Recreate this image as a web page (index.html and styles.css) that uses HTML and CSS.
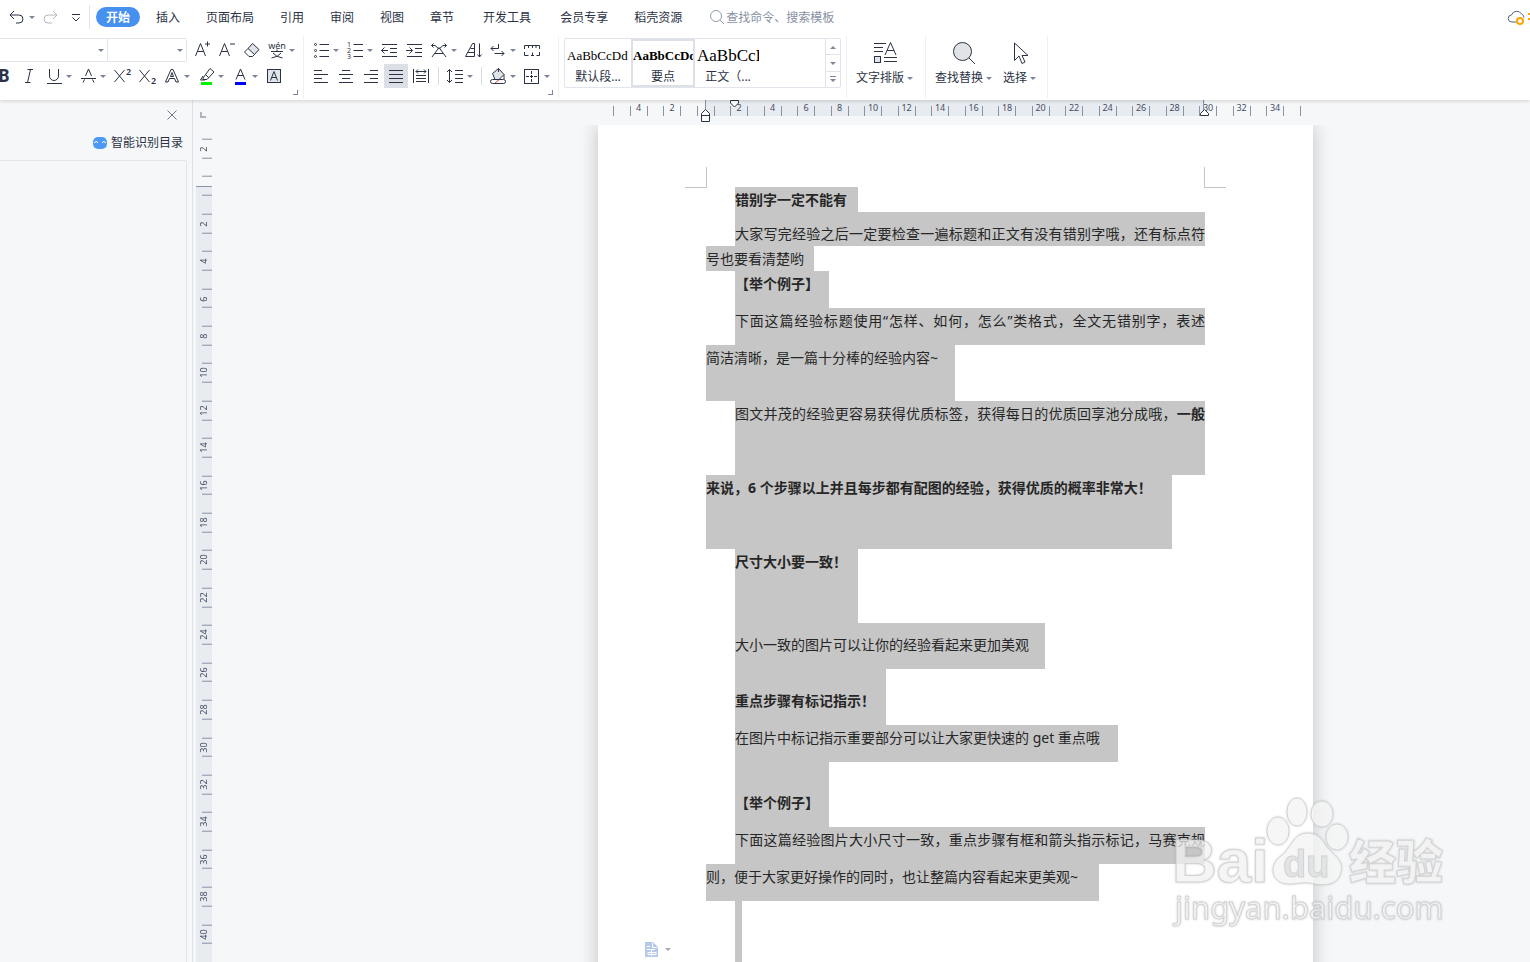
FILE: index.html
```html
<!DOCTYPE html>
<html lang="zh-CN">
  <head>
    <meta charset="UTF-8" />
    <meta name="viewport" content="width=device-width, initial-scale=1.0" />
    <title>文档</title>
    <link rel="stylesheet" href="styles.css">
  </head>
  <body>
    <header class="ribbon">
      <div class="menu">
        <div class="quick">
          <button class="tool drop" aria-label="撤销"><svg viewBox="0 0 24 24"><path d="M10 7L6 11L10 15M6 11H15a3.500 3.500 0 0 1 0 8H12" transform="translate(-1 -1)" /></svg></button>
          <button class="tool faded" aria-label="恢复"><svg viewBox="0 0 24 24"><path d="M14 6L18 10L14 14M18 10H9a3.500 3.500 0 0 0 0 8H13" /></svg></button>
          <button class="tool" aria-label="自定义"><svg viewBox="0 0 24 24"><path d="M8 9.500H16M8.500 12.500L12 16L15.500 12.500" /></svg></button>
        </div>
        <nav class="tabs">
          <button class="tab active">开始</button>
          <button class="tab">插入</button>
          <button class="tab">页面布局</button>
          <button class="tab">引用</button>
          <button class="tab">审阅</button>
          <button class="tab">视图</button>
          <button class="tab">章节</button>
          <button class="tab wide">开发工具</button>
          <button class="tab wide">会员专享</button>
          <button class="tab">稻壳资源</button>
        </nav>
        <label class="search">
          <svg viewBox="0 0 16 16"><circle cx="7" cy="7" r="5.500" /><path d="M11 11L15 15" /></svg>
          <input type="text" placeholder="查找命令、搜索模板" aria-label="查找命令、搜索模板" />
        </label>
        <button class="cloud" aria-label="云同步">
          <svg viewBox="0 0 24 20"><path d="M10 15H6a3.500 3.500 0 0 1-.5-7A5.500 5.500 0 0 1 15.500 7A4 4 0 0 1 18 10.500" /><circle class="orange" cx="14" cy="14" r="3" /><path class="orange thin" d="M23 6V8M23 11V13" /></svg>
        </button>
      </div>

      <div class="tools">
        <section class="group font-group">
          <div class="row">
            <label class="combo combo-font"><select aria-label="字体"><option></option></select></label>
            <label class="combo combo-size"><select aria-label="字号"><option></option></select></label>
            <button class="tool" aria-label="增大字号"><svg viewBox="0 0 24 24"><path d="M5.500 18L10.500 5.500L15.500 18M7.500 13.500H13.500M17.500 3.500V8.500M15 6H20" /></svg></button>
            <button class="tool" aria-label="减小字号"><svg viewBox="0 0 24 24"><path d="M4.500 18L9.500 5.500L14.500 18M6.500 13.500H12.500M15 6H20" /></svg></button>
            <button class="tool" aria-label="清除格式"><svg viewBox="0 0 24 24"><path class="tint" d="M12.500 5.500L19 11.500L14.500 16.500L8 10.500Z" /><path d="M8 10.500L4.500 14L9 18.500H12.500L14.500 16.500" /></svg></button>
            <button class="tool drop" aria-label="拼音指南"><svg viewBox="0 0 24 24"><text x="12" y="11" font-size="9" text-anchor="middle">wén</text><path d="M6 13.500H18M12 11.500V13.500M8 15Q11 19 17.500 20M16 15Q13 19 6.500 20" /></svg></button>
          </div>
          <div class="row row-text">
            <button class="tool" aria-label="加粗"><svg viewBox="0 0 24 24"><text x="12" y="18" font-size="17" font-weight="700" text-anchor="middle">B</text></svg></button>
            <button class="tool" aria-label="倾斜"><svg viewBox="0 0 24 24"><path d="M10.500 5.500H16M8 18.500H13.500M13.500 5.500L10.500 18.500" /></svg></button>
            <button class="tool drop" aria-label="下划线"><svg viewBox="0 0 24 24"><path d="M7.500 5V12a4.500 4.500 0 0 0 9 0V5M5 19.500H20" /></svg></button>
            <button class="tool drop" aria-label="删除线"><svg viewBox="0 0 24 24"><path d="M9.500 12L12.500 5L15.500 12M8.500 15.500L7 18.500M16.500 15.500L18 18.500M5 14.500H20" /></svg></button>
            <button class="tool" aria-label="上标"><svg viewBox="0 0 24 24"><path d="M4.500 6L14.500 18M14.500 6L4.500 18" /><text x="16" y="11" font-size="9" font-weight="600">2</text></svg></button>
            <button class="tool" aria-label="下标"><svg viewBox="0 0 24 24"><path d="M4.500 6L14.500 18M14.500 6L4.500 18" /><text x="16" y="20" font-size="9" font-weight="600">2</text></svg></button>
            <button class="tool drop" aria-label="文字效果"><svg viewBox="0 0 24 24"><path d="M5.500 18L11 5.500H13L18.500 18H16L14.500 14.500H9.500L8 18ZM10.500 12.500L12 8.500L13.500 12.500Z" /></svg></button>
            <button class="tool drop" aria-label="突出显示"><svg viewBox="0 0 24 24"><path d="M9 14L16 4.500L20 8L13 15.500H9ZM9 12L6.500 16H11M11.500 10.500L15 14" /><path class="green" d="M7 19.500H18" /></svg></button>
            <button class="tool drop" aria-label="字体颜色"><svg viewBox="0 0 24 24"><path d="M8 15.500L12.500 5L17 15.500M9.500 11.500H15.500" /><path class="blue" d="M7 19.500H18" /></svg></button>
            <button class="tool" aria-label="字符底纹"><svg viewBox="0 0 24 24"><rect class="tint" x="5.500" y="5.500" width="13" height="13" /><path d="M8.500 16.500L12 7.500L15.500 16.500M9.500 13.500H14.500" /></svg></button>
          </div>
          <i class="launcher"></i>
        </section>

        <section class="group para-group">
          <div class="row">
            <button class="tool drop" aria-label="项目符号"><svg viewBox="0 0 24 24"><path d="M10.500 6.500H20M10.500 12.500H20M10.500 18.500H20" /><circle cx="6.500" cy="6.500" r="1" /><circle cx="6.500" cy="12.500" r="1" /><circle cx="6.500" cy="18.500" r="1" /></svg></button>
            <button class="tool drop" aria-label="编号"><svg viewBox="0 0 24 24"><path d="M10.500 6.500H20M10.500 12.500H20M10.500 18.500H20" /><text x="4" y="9" font-size="7">1</text><text x="4" y="15" font-size="7">2</text><text x="4" y="21" font-size="7">3</text></svg></button>
            <button class="tool" aria-label="减少缩进"><svg viewBox="0 0 24 24"><path d="M5 6.500H20M13 10.500H20M13 14.500H20M5 18.500H20M4.500 12.500H11M7.500 9.500L4.500 12.500L7.500 15.500" /></svg></button>
            <button class="tool" aria-label="增加缩进"><svg viewBox="0 0 24 24"><path d="M5 6.500H20M13 10.500H20M13 14.500H20M5 18.500H20M4 12.500H10.500M7.500 9.500L10.500 12.500L7.500 15.500" /></svg></button>
            <button class="tool drop" aria-label="中文版式"><svg viewBox="0 0 24 24"><path d="M5 19L12 9.500L19 19M8 15.500H16M4.500 7.500H8L12 11M19.500 7.500H16L12 11M6.500 5.500L4.500 7.500L6.500 9.500M17.500 5.500L19.500 7.500L17.500 9.500" /></svg></button>
            <button class="tool" aria-label="排序"><svg viewBox="0 0 24 24"><path d="M4.500 18.500L11.500 5.500H13.500V18.500ZM7 14.500H13.500M9.500 10.500H13.500M18.500 5.500V19M16.500 16.500L18.500 19L20.500 16.500" /></svg></button>
            <button class="tool drop" aria-label="换行"><svg viewBox="0 0 24 24"><path d="M12.500 6V10.500H5M7.500 8L5 10.500L7.500 13M8.500 15.500H18M15.500 13L18 15.500L15.500 18" /></svg></button>
            <button class="tool" aria-label="制表位"><svg viewBox="0 0 24 24"><path d="M4.500 11V7.500H19.500V11M8.500 7.500V10M12.500 7.500V10M16 7.500V10M4.500 14V17.500H8.500M11 17.500H14M16.500 17.500H19.500V14M12.500 14.500V17" /></svg></button>
          </div>
          <div class="row">
            <button class="tool" aria-label="左对齐"><svg viewBox="0 0 24 24"><path d="M5 6.500H13M5 10.500H19M5 14.500H13M5 18.500H19" /></svg></button>
            <button class="tool" aria-label="居中"><svg viewBox="0 0 24 24"><path d="M8 6.500H16M5 10.500H19M8 14.500H16M5 18.500H19" /></svg></button>
            <button class="tool" aria-label="右对齐"><svg viewBox="0 0 24 24"><path d="M11 6.500H19M5 10.500H19M11 14.500H19M5 18.500H19" /></svg></button>
            <button class="tool pressed" aria-label="两端对齐"><svg viewBox="0 0 24 24"><path d="M5 6.500H19M5 10.500H19M5 14.500H19M5 18.500H19" /></svg></button>
            <button class="tool" aria-label="分散对齐"><svg viewBox="0 0 24 24"><path d="M4.500 5V19M19.500 5V19M7 7.500H17M9 5.500L7 7.500L9 9.500M15 5.500L17 7.500L15 9.500M7 11.500H17M7 14.500H17M7 17.500H17" /></svg></button>
            <i class="bar"></i>
            <button class="tool drop" aria-label="行距"><svg viewBox="0 0 24 24"><path d="M6.500 5.500V18.500M4 8L6.500 5.500L9 8M4 16L6.500 18.500L9 16M12 6.500H20M12 10.500H20M12 14.500H20M12 18.500H20" /></svg></button>
            <i class="bar"></i>
            <button class="tool drop" aria-label="底纹颜色"><svg viewBox="0 0 24 24"><path class="tint" d="M6.500 9.500L12.500 4.500L18 10.500L13 15.500H9Z" /><path d="M12.500 4.500V8M18 10.500V15" /><rect class="plain" x="4.500" y="15.500" width="15" height="4" rx="2" /><path class="red" d="M9 19L13 16" /></svg></button>
            <button class="tool drop" aria-label="边框"><svg viewBox="0 0 24 24"><rect x="4.500" y="5.500" width="14" height="14" /><path stroke-dasharray="3 1" d="M11.500 7V18M6 12.500H17" /></svg></button>
          </div>
          <i class="launcher"></i>
        </section>

        <section class="group style-group">
          <div class="gallery">
            <button class="style"><span class="sample">AaBbCcDd</span><span class="name">默认段...</span></button>
            <button class="style chosen"><span class="sample strong">AaBbCcDd</span><span class="name">要点</span></button>
            <button class="style"><span class="sample large">AaBbCcI</span><span class="name">正文（...</span></button>
            <div class="scroller">
              <button aria-label="上一行"><svg viewBox="0 0 14 14"><path d="M4 9L7 6L10 9Z" /></svg></button>
              <button aria-label="下一行"><svg viewBox="0 0 14 14"><path d="M4 6L7 9L10 6Z" /></svg></button>
              <button aria-label="更多样式"><svg viewBox="0 0 14 14"><path d="M4 7L7 10L10 7ZM4 4H10V5H4Z" /></svg></button>
            </div>
          </div>
        </section>

        <section class="group layout-group">
          <button class="big"><svg viewBox="0 0 28 28"><path d="M3 4.500H15M3 8.500H12M3 12.500H12M13 22.500H26M13 18.500H26M14 16L19.500 3.500L25 16M16 11.500H23" /><rect class="tint" x="3.500" y="17.500" width="6" height="6" /></svg><span class="caption">文字排版</span></button>
        </section>

        <section class="group edit-group">
          <button class="big"><svg viewBox="0 0 28 28"><circle class="tint" cx="12.500" cy="12.500" r="9" /><path d="M19 19L25 25" /></svg><span class="caption">查找替换</span></button>
          <button class="big"><svg viewBox="0 0 28 28"><path d="M8.500 4V21.500L13 17L16 24.500L19 23L16 16.500H22Z" /></svg><span class="caption">选择</span></button>
        </section>
      </div>
    </header>

    <main class="workspace">
      <aside class="outline">
        <button class="close" aria-label="关闭"><svg viewBox="0 0 10 10"><path d="M.5 .5L9.500 9.500M9.500 .5L.5 9.500" /></svg></button>
        <button class="detect"><svg viewBox="0 0 14 12"><rect width="14" height="12" rx="5" /><path d="M1 6L3 4.500L5 5.500M9 5.500L11 4.500L13 6" /></svg>智能识别目录</button>
        <div class="tree"></div>
      </aside>

      <div class="v-ruler">
        <i class="tab-stop"></i>
        <div class="v-scale">
          <b>2</b><b></b><b></b><b></b><b>2</b><b></b><b>4</b><b></b><b>6</b><b></b><b>8</b><b></b>
          <b>10</b><b></b><b>12</b><b></b><b>14</b><b></b><b>16</b><b></b><b>18</b><b></b>
          <b>20</b><b></b><b>22</b><b></b><b>24</b><b></b><b>26</b><b></b><b>28</b><b></b>
          <b>30</b><b></b><b>32</b><b></b><b>34</b><b></b><b>36</b><b></b><b>38</b><b></b>
          <b>40</b><b></b>
        </div>
      </div>

      <div class="canvas">
        <div class="h-ruler">
          <div class="h-scale">
            <b></b><b>4</b><b></b><b>2</b><b></b><b></b><b></b><b>2</b><b></b><b>4</b><b></b><b>6</b><b></b><b>8</b>
            <b></b><b>10</b><b></b><b>12</b><b></b><b>14</b><b></b><b>16</b><b></b><b>18</b>
            <b></b><b>20</b><b></b><b>22</b><b></b><b>24</b><b></b><b>26</b><b></b><b>28</b>
            <b></b><b>30</b><b></b><b>32</b><b></b><b>34</b><b></b>
          </div>
          <svg class="marker marker-left" viewBox="0 0 11 23"><path class="stem" d="M5.500 0V10" /><path class="fill" d="M1.500 21.500V13.500L5.500 9.500L9.500 13.500V21.500ZM1.500 15.500H9.500" /></svg>
          <svg class="marker marker-first" viewBox="0 0 11 23"><path class="fill" d="M1.500 .5H9.500V3L5.500 7L1.500 3Z" /></svg>
          <svg class="marker marker-right" viewBox="0 0 11 23"><path class="stem" d="M4.500 0V10" /><path class="fill" d="M1.500 15.500V13.500L5.500 9.500L9.500 13.500V15.500Z" /></svg>
        </div>

        <article class="page">
          <i class="corner corner-left"></i>
          <i class="corner corner-right"></i>

          <p class="strong"><span class="line indent cells-8">错别字一定不能有</span></p>
          <p>
            <span class="line indent full before-9">大家写完经验之后一定要检查一遍标题和正文有没有错别字哦，还有标点符</span>
            <span class="line cells-7">号也要看清楚哟</span>
          </p>
          <p class="strong"><span class="line indent cells-6 after-12">【举个例子】</span></p>
          <p>
            <span class="line indent full after-12">下面这篇经验标题使用“怎样、如何，怎么”类格式，全文无错别字，表述</span>
            <span class="line cells-17 after-31">简洁清晰，是一篇十分棒的经验内容~</span>
          </p>
          <p>
            <span class="line indent full after-49">图文并茂的经验更容易获得优质标签，获得每日的优质回享池分成哦，<strong>一般</strong></span>
            <span class="line cells-32 after-49"><strong>来说，6 个步骤以上并且每步都有配图的经验，获得优质的概率非常大！</strong></span>
          </p>
          <p class="strong"><span class="line indent cells-8 after-49">尺寸大小要一致！</span></p>
          <p><span class="line indent cells-21 before-9 after-12">大小一致的图片可以让你的经验看起来更加美观</span></p>
          <p class="strong"><span class="line indent cells-10 before-19 after-12">重点步骤有标记指示！</span></p>
          <p><span class="line indent cells-26 after-12">在图片中标记指示重要部分可以让大家更快速的 get 重点哦</span></p>
          <p class="strong"><span class="line indent cells-6 before-28 after-12">【举个例子】</span></p>
          <p>
            <span class="line indent full after-12">下面这篇经验图片大小尺寸一致，重点步骤有框和箭头指示标记，马赛克规</span>
            <span class="line cells-27 after-12">则，便于大家更好操作的同时，也让整篇内容看起来更美观~</span>
          </p>
          <p><span class="line indent blank after-49"></span></p>

          <button class="paste" aria-label="段落选项"><svg viewBox="0 0 13 15"><path class="sheet" d="M0 0H8L13 5V15H0Z" /><path class="rule" d="M7.500 1V5.500H12M2 4.500H5M2 7.500H10M3 10.500H11V12.500H3ZM6.500 8V14" /></svg></button>
        </article>
      </div>
    </main>

    <svg class="watermark" viewBox="0 0 290 150" aria-hidden="true">
      <ellipse cx="108" cy="61" rx="11" ry="14" />
      <ellipse cx="127" cy="42" rx="10" ry="14" />
      <ellipse cx="152" cy="44" rx="11" ry="13" />
      <ellipse cx="167" cy="67" rx="11" ry="13" />
      <path d="M137 63C123 63 121 79 111 86C98 95 101 114 119 114C128 114 131 112 140 113C153 116 168 116 171 102C174 90 162 84 156 76C151 68 147 63 137 63Z" />
      <text class="word" x="2" y="112">Bai</text>
      <text class="du" x="113" y="107">du</text>
      <text class="cjk" x="179" y="109">经验</text>
      <text class="site" x="5" y="149">jingyan.baidu.com</text>
    </svg>
  </body>
</html>
```

FILE: styles.css
```css
* {
  margin: 0;
  padding: 0;
  box-sizing: border-box;
}

:root {
  --ink: #2b3245;
  --muted: #7c879e;
  --line: #e1e4ea;
  --back: #f5f7f9;
  --band: #e8ebf0;
  --select: #c6c6c6;
  font-family: "Noto Sans", "Noto Sans CJK SC", sans-serif;
}

body {
  display: flex;
  flex-direction: column;
  height: 100vh;
  overflow: hidden;
  position: relative;
  background: var(--back);
  color: var(--ink);
  font-size: 12px;
}

button,
input,
select {
  border: none;
  background: none;
  color: inherit;
  font: inherit;
}

svg {
  fill: none;
  stroke: var(--ink);
  stroke-width: 1;
}

svg text {
  fill: var(--ink);
  stroke: none;
}

.tint {
  fill: #e1e4e7;
}

/* ribbon */

.ribbon {
  height: 100px;
  flex: none;
  background: #fff;
  box-shadow: 0 1px 4px rgba(0, 0, 0, 0.16);
  position: relative;
  z-index: 2;
}

.menu {
  display: flex;
  align-items: center;
  height: 34px;
}

.quick {
  display: flex;
  align-items: center;
  height: 24px;
  width: 90px;
  padding-left: 5px;
  border-right: 1px solid var(--line);
}

.faded svg {
  stroke: #b4b8c0;
}

.tabs {
  display: flex;
  padding-left: 6px;
}

.tab {
  height: 20px;
  padding: 1px 13px 0;
  line-height: 20px;
  white-space: nowrap;
}

.tab.active {
  padding: 1px 10px 0;
  margin-right: 3px;
  border-radius: 10px;
  background: #4690f0;
  color: #fff;
  font-weight: 700;
}

.tab.wide {
  padding-left: 16px;
}

.search {
  display: flex;
  align-items: center;
  gap: 1px;
  margin-left: 14px;
  color: #8790a5;
}

.search svg {
  width: 16px;
  height: 16px;
  stroke: #929bb0;
}

.search input {
  width: 150px;
  outline: none;
}

.search input::placeholder {
  color: #8790a5;
}

.cloud {
  margin-left: auto;
  width: 24px;
  height: 20px;
}

.cloud svg {
  width: 24px;
  height: 20px;
  stroke: #56617b;
}

.cloud .orange {
  stroke: #ffa400;
  stroke-width: 2;
}

.tools {
  display: flex;
  height: 64px;
  padding-top: 2px;
}

.group {
  position: relative;
  height: 62px;
  border-right: 1px solid #eff0f3;
}

.row {
  display: flex;
  align-items: center;
  height: 26px;
  padding-top: 2px;
}

.row-text {
  margin-left: -8px;
}

.font-group {
  width: 304px;
}

.para-group {
  width: 255px;
  padding-left: 5px;
}

.combo {
  position: relative;
  height: 24px;
  border: 1px solid var(--line);
  border-left: none;
}

.combo-font {
  width: 108px;
}

.combo-size {
  width: 79px;
  margin-right: 3px;
  border-radius: 0 2px 2px 0;
}

.combo select {
  width: 100%;
  height: 100%;
  appearance: none;
}

.combo::after,
.drop::after,
.caption::after,
.paste::after {
  content: "";
  border: 3px solid transparent;
  border-top-color: var(--muted);
  border-bottom: none;
}

.combo::after {
  position: absolute;
  right: 3px;
  top: 10px;
}

.tool {
  display: flex;
  align-items: center;
  flex: none;
  width: 25px;
  height: 24px;
}

.tool svg {
  flex: none;
  width: 24px;
  height: 24px;
}

.tool.drop {
  width: 34px;
}

.tool.pressed {
  background: linear-gradient(#dce0e6, #dce0e6) 0 0 / 24px 24px no-repeat;
}

.green {
  stroke: #00f500;
  stroke-width: 3;
}

.blue {
  stroke: #0000f5;
  stroke-width: 3;
}

.red {
  stroke: #e5484d;
}

.plain {
  fill: #fff;
}

.bar {
  width: 9px;
  height: 18px;
  background: linear-gradient(#d9dce2, #d9dce2) center / 1px 100% no-repeat;
}

.launcher {
  position: absolute;
  right: 5px;
  bottom: 3px;
  width: 5px;
  height: 5px;
  border: solid var(--muted);
  border-width: 0 1px 1px 0;
}

.style-group {
  width: 288px;
  padding: 2px 5px;
}

.gallery {
  display: flex;
  height: 50px;
  border: 1px solid var(--line);
  border-radius: 2px;
}

.style {
  display: flex;
  flex-direction: column;
  justify-content: flex-start;
  align-items: center;
  width: 66px;
  padding: 2px 2px 0;
  overflow: hidden;
}

.style.chosen {
  width: 64px;
  padding: 0;
  border: 2px solid #dde0e6;
}

.sample {
  flex: none;
  align-self: stretch;
  height: 26px;
  overflow: hidden;
  color: #000;
  font-family: "Liberation Serif", serif;
  font-size: 13px;
  line-height: 30px;
  text-align: left;
}

.sample.strong {
  font-weight: 700;
}

.sample.large {
  font-size: 17px;
}

.name {
  flex: none;
  line-height: 18px;
  padding-top: 1px;
  white-space: nowrap;
}

.scroller {
  display: flex;
  flex-direction: column;
  width: 15px;
  margin-left: auto;
  border-left: 1px solid var(--line);
}

.scroller button {
  flex: 1;
  line-height: 0;
}

.scroller button + button {
  border-top: 1px solid var(--line);
}

.scroller svg {
  width: 14px;
  height: 14px;
  fill: var(--muted);
  stroke: none;
}

.layout-group {
  width: 79px;
  padding-left: 9px;
}

.edit-group {
  display: flex;
  gap: 11px;
  width: 122px;
  padding-left: 9px;
}

.big {
  display: flex;
  flex-direction: column;
  align-items: center;
  padding-top: 3px;
}

.big svg {
  width: 28px;
  height: 28px;
}

.caption {
  display: flex;
  align-items: center;
  gap: 3px;
  line-height: 22px;
  white-space: nowrap;
}

/* outline pane */

.workspace {
  display: flex;
  flex: 1;
  min-height: 0;
}

.outline {
  display: flex;
  flex-direction: column;
  flex: none;
  width: 193px;
  border-right: 1px solid #dfe2ea;
}

.close {
  align-self: flex-end;
  width: 10px;
  height: 10px;
  margin: 10px 15px 0 0;
  line-height: 0;
}

.close svg {
  width: 10px;
  height: 10px;
  stroke: #6c7690;
}

.detect {
  display: flex;
  align-items: center;
  align-self: flex-end;
  gap: 4px;
  margin: 13px 9px 7px 0;
  line-height: 20px;
}

.detect svg {
  width: 14px;
  height: 12px;
  fill: #4b9af5;
  stroke: none;
}

.detect path {
  stroke: #fff;
}

.tree {
  flex: 1;
  margin-right: 5px;
  border: solid var(--line);
  border-width: 1px 1px 0 0;
  border-radius: 0 2px 0 0;
}

/* rulers */

.v-ruler {
  flex: none;
  width: 20px;
  padding: 12px 0 0 3px;
  overflow: hidden;
}

.tab-stop {
  display: block;
  width: 6px;
  height: 6px;
  margin: 0 0 21px 4px;
  border: solid #b0b4c0;
  border-width: 0 0 2px 2px;
}

.v-scale,
.h-scale {
  display: flex;
  color: #454f66;
  font-size: 9px;
}

.v-scale {
  flex-direction: column;
  width: 16px;
  height: 823px;
  background: linear-gradient(#8793a8, #8793a8) 0 47px / 16px 1px no-repeat,
    linear-gradient(var(--band), var(--band)) 0 47px no-repeat;
}

.v-scale b,
.h-scale b {
  flex: 1;
  font-weight: 400;
  text-align: center;
}

.v-scale b {
  margin-left: 6px;
  border-bottom: 1px solid #8793a8;
  line-height: 4px;
  writing-mode: vertical-rl;
  transform: rotate(180deg);
}

.canvas {
  flex: 1;
  min-width: 0;
  padding-left: 385px;
  overflow: hidden;
}

.h-ruler {
  position: relative;
  width: 715px;
  height: 25px;
  padding: 6px 12px 0 15px;
  z-index: 1;
}

.h-ruler::before {
  content: "";
  position: absolute;
  inset: 0 -217px 0 -385px;
  background: linear-gradient(var(--band), var(--band)) 493px 0 / 499px 16px no-repeat, var(--back);
}

.h-scale {
  position: relative;
}

.h-scale b {
  height: 10px;
  min-width: 0;
  border-left: 1px solid #8793a8;
  line-height: 4px;
}

.h-scale b:last-child {
  border-right: 1px solid #8793a8;
}

.marker {
  position: absolute;
  top: 0;
  width: 11px;
  height: 23px;
}

.marker .stem {
  stroke: #8793a8;
}

.marker .fill {
  fill: #fff;
}

.marker-left {
  left: 102px;
}

.marker-first {
  left: 131px;
}

.marker-right {
  left: 601px;
}

/* page */

.page {
  position: relative;
  width: 715px;
  min-height: 100%;
  padding: 62px 108px 0;
  background: #fff;
  box-shadow: 0 0 18px rgba(0, 0, 0, 0.22);
  color: #262626;
  font-size: 14px;
}

.corner {
  position: absolute;
  top: 42px;
  width: 22px;
  height: 21px;
  border: solid #c4c4c4;
}

.corner-left {
  left: 87px;
  border-width: 0 1px 1px 0;
}

.corner-right {
  right: 87px;
  border-width: 0 0 1px 1px;
}

.line {
  display: block;
  background: var(--select);
  line-height: 25px;
  white-space: nowrap;
}

.strong {
  font-weight: 700;
}

.indent {
  margin-left: 29px;
}

.full {
  text-align: justify;
  text-align-last: justify;
  white-space: normal;
}

/* selected width of a line, by its number of characters */
.cells-6 { width: 94px; }
.cells-7 { width: 108px; }
.cells-8 { width: 123px; }
.cells-10 { width: 151px; }
.cells-17 { width: 249px; }
.cells-21 { width: 310px; }
.cells-26 { width: 383px; }
.cells-27 { width: 393px; }
.cells-32 { width: 466px; }

.before-9 { padding-top: 9px; }
.before-19 { padding-top: 19px; }
.before-28 { padding-top: 28px; }
.after-12 { padding-bottom: 12px; }
.after-31 { padding-bottom: 31px; }
.after-49 { padding-bottom: 49px; }

.blank {
  width: 7px;
  height: 74px;
}

.paste {
  position: absolute;
  left: 47px;
  top: 817px;
  display: flex;
  align-items: center;
  gap: 7px;
}

.paste svg {
  width: 13px;
  height: 15px;
}

.paste::after {
  border-top-color: #a8a8a8;
}

.paste .sheet {
  fill: #b5caea;
  stroke: none;
}

.paste .rule {
  stroke: #fff;
}

/* watermark */

.watermark {
  position: absolute;
  right: 70px;
  bottom: 42px;
  width: 290px;
  height: 150px;
  z-index: 3;
  overflow: visible;
  fill: rgba(255, 255, 255, 0.75);
  stroke: #d2d3d4;
  filter: drop-shadow(0 0 1px rgba(0, 0, 0, 0.2));
}

.watermark text {
  fill: rgba(255, 255, 255, 0.7);
  stroke: #d2d3d4;
}

.watermark .word {
  font: 700 62px "Liberation Sans", sans-serif;
}

.watermark .du {
  font: 700 38px "Liberation Sans", sans-serif;
  fill: #e2e3e4;
}

.watermark .cjk {
  font: 900 47px "Noto Sans CJK SC", sans-serif;
}

.watermark .site {
  font: 31px "Noto Sans", sans-serif;
}
```
